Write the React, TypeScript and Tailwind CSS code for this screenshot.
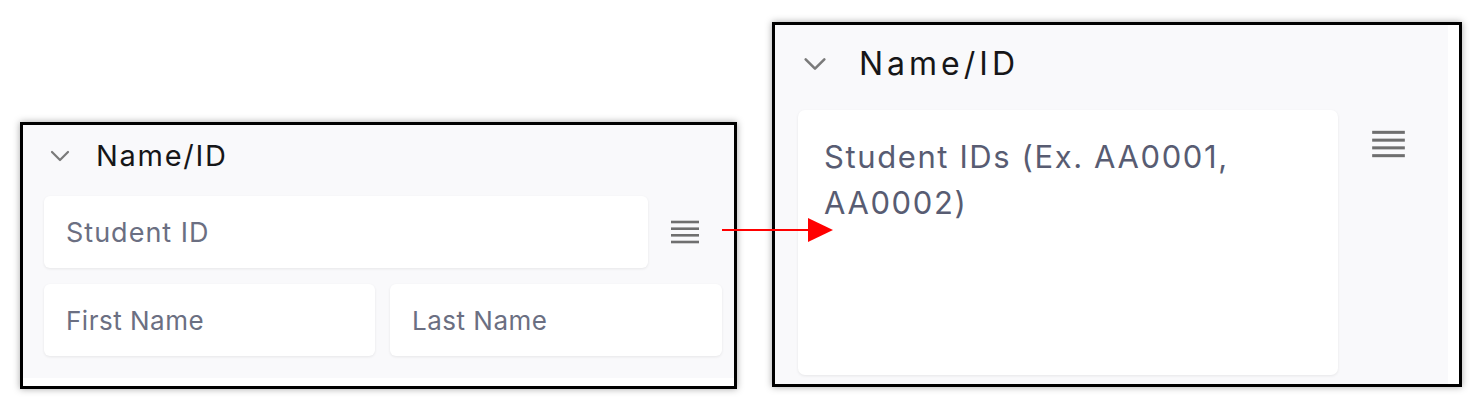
import React from 'react';

function Chevron({ className }: { className?: string }) {
  return (
    <svg viewBox="0 0 20 12" className={className} fill="none">
      <polyline points="2,2 10,10 18,2" stroke="#7a7a7a" strokeWidth="2.2" strokeLinecap="round" strokeLinejoin="round" />
    </svg>
  );
}

function Hamburger({ className }: { className?: string }) {
  return (
    <svg viewBox="0 0 28 24" className={className}>
      {[2, 8.7, 15.3, 22].map((y) => (
        <rect key={y} x="0" y={y - 1.3} width="28" height="2.6" fill="#6f6f6f" />
      ))}
    </svg>
  );
}

function Field({ label, className }: { label: string; className?: string }) {
  return (
    <div
      className={`bg-white rounded-[6px] shadow-[0_1px_3px_rgba(0,0,0,0.08)] flex items-center pl-[22px] text-[#6b6f82] ${className ?? ''}`}
    >
      {label}
    </div>
  );
}

function SmallPanel() {
  return (
    <div className="mt-[100px] w-[717px] h-[267px] border-[3px] border-black bg-white shadow-[0_0_7px_rgba(0,0,0,0.35)] shrink-0">
      <div className="h-[253px] bg-[#f9f9fb] pl-[21px] pr-[12px] font-['Inter',sans-serif]">
        {/* Header */}
        <div className="h-[62px] flex items-center">
          <Chevron className="ml-[6px] w-[20px] h-[12px]" />
          <span className="ml-[26px] text-[29px] text-[#161618] tracking-[1.7px]">Name/ID</span>
        </div>

        <div className="mt-[9px] flex items-center">
          <Field label="Student ID" className="w-[604px] h-[72px] pt-[2px] text-[27px] tracking-[1px]" />
          <Hamburger className="ml-[23px] w-[28px] h-[24px]" />
        </div>

        <div className="mt-[16px] flex gap-[15px]">
          <Field label="First Name" className="w-[331px] h-[72px] text-[26px] tracking-[0.5px]" />
          <Field label="Last Name" className="w-[332px] h-[72px] text-[26px] tracking-[0.5px]" />
        </div>
      </div>
    </div>
  );
}

function BigPanel() {
  return (
    <div className="w-[690px] h-[365px] border-[3px] border-black bg-white shadow-[0_0_7px_rgba(0,0,0,0.35)] shrink-0">
      <div className="w-[673px] h-full bg-[#f9f9fb] pl-[23px] font-['Inter',sans-serif]">
        <div className="h-[78px] flex items-center">
          <Chevron className="ml-[5px] w-[24px] h-[14px]" />
          <span className="ml-[32px] text-[32px] text-[#161618] tracking-[4px]">Name/ID</span>
        </div>

        <div className="mt-[7px] flex items-start">
          <div className="w-[540px] h-[265px] bg-white rounded-[7px] shadow-[0_1px_3px_rgba(0,0,0,0.08)] pl-[26px] pr-[20px] pt-[24px] text-[31px] leading-[46px] tracking-[1.6px] text-[#585c72]">
            Student IDs (Ex. AA0001, AA0002)
          </div>
          <Hamburger className="ml-[34px] mt-[20px] w-[33px] h-[28px]" />
        </div>
      </div>
    </div>
  );
}

export default function App() {
  return (
    <div className="relative w-[1482px] h-[410px] bg-white flex items-start pl-[20px] pt-[22px] gap-[35px]">
      <SmallPanel />
      <BigPanel />

      {/* red pointer arrow */}
      <svg className="absolute left-[720px] top-[216px] w-[116px] h-[28px]" viewBox="0 0 116 28">
        <line x1="2" y1="14" x2="92" y2="14" stroke="#ff0000" strokeWidth="2" />
        <polygon points="88,2 113,14 88,26" fill="#ff0000" />
      </svg>
    </div>
  );
}
